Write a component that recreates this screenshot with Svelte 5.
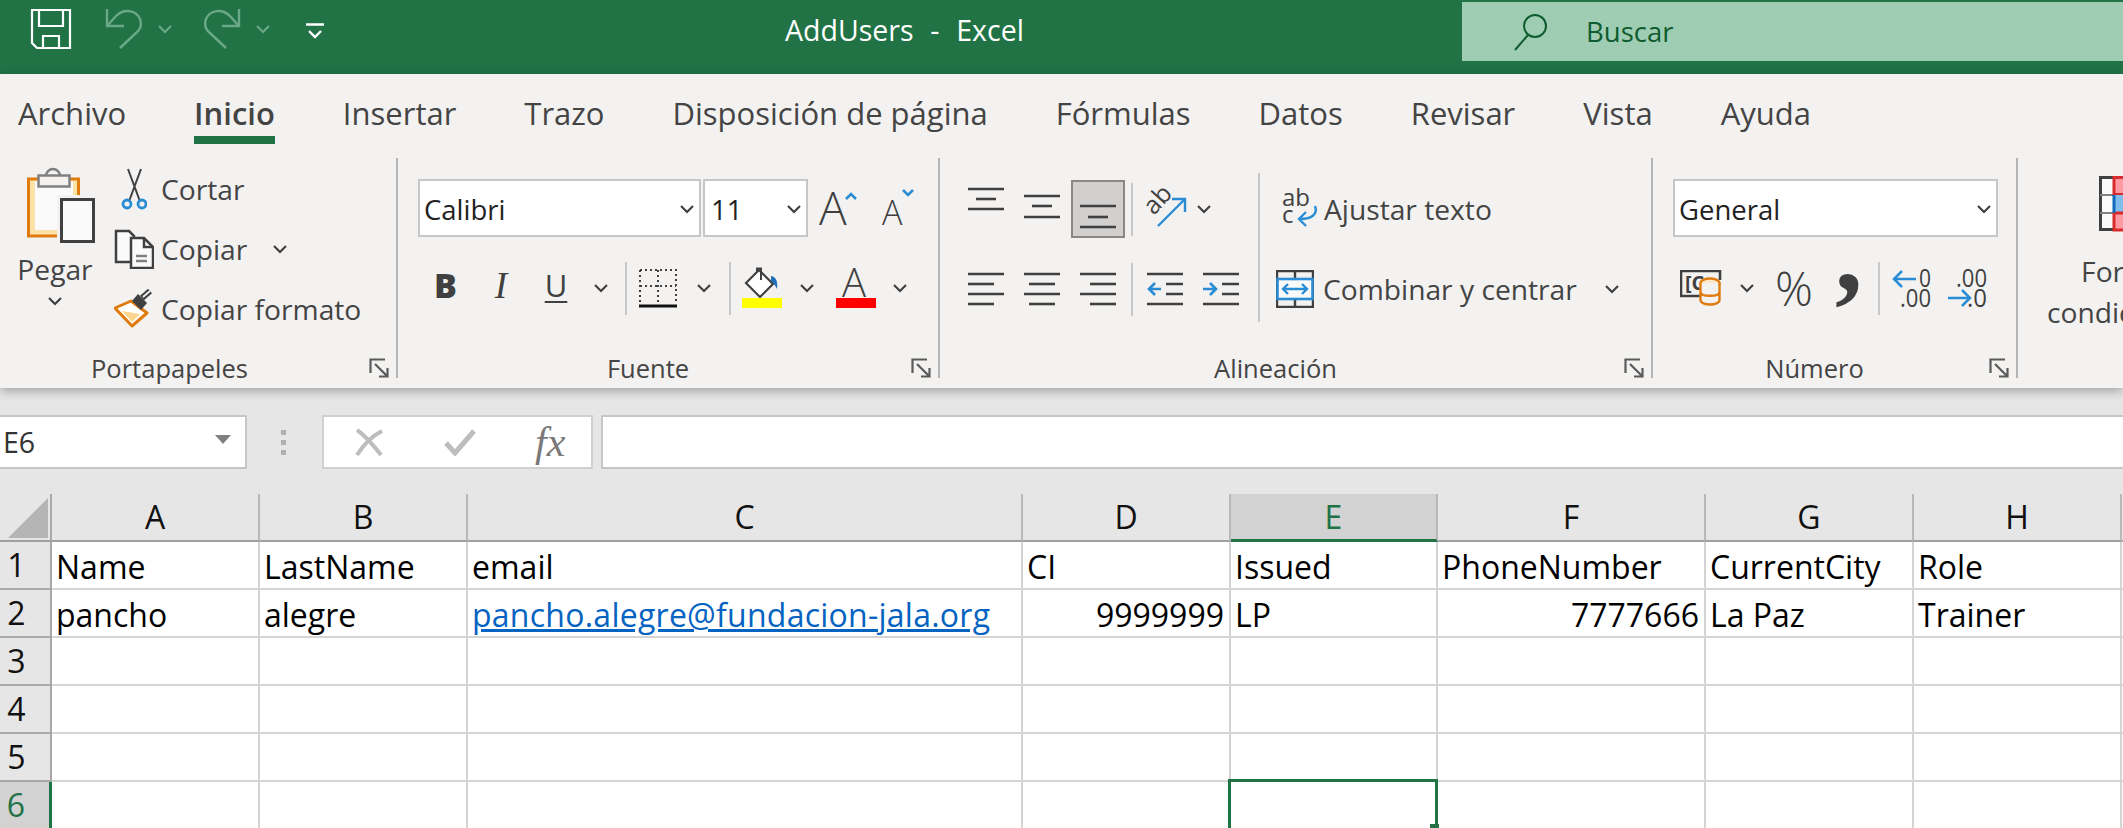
<script>
  const tabs = ['Archivo', 'Inicio', 'Insertar', 'Trazo', 'Disposición de página', 'Fórmulas', 'Datos', 'Revisar', 'Vista', 'Ayuda'];

  const columns = ['A', 'B', 'C', 'D', 'E', 'F', 'G', 'H', ''];
  const rows = [
    ['Name', 'LastName', 'email', 'CI', 'Issued', 'PhoneNumber', 'CurrentCity', 'Role', ''],
    ['pancho', 'alegre', 'pancho.alegre@fundacion-jala.org', '9999999', 'LP', '7777666', 'La Paz', 'Trainer', ''],
    ['', '', '', '', '', '', '', '', ''],
    ['', '', '', '', '', '', '', '', ''],
    ['', '', '', '', '', '', '', '', ''],
    ['', '', '', '', '', '', '', '', '']
  ];

  // vertical align icons: each line is [x1, x2, y]
  const vAlign = [
    { lines: [[0, 36, 4], [8, 28, 14], [0, 36, 24]], cls: '' },
    { lines: [[0, 36, 11], [8, 28, 21], [0, 36, 32]], cls: '' },
    { lines: [[0, 36, 21], [8, 28, 32], [0, 36, 42]], cls: 'active' }
  ];
  const hAlign = [
    [[0, 36, 3], [0, 26, 13], [0, 36, 23], [0, 26, 33]],
    [[0, 36, 3], [5, 31, 13], [0, 36, 23], [5, 31, 33]],
    [[0, 36, 3], [10, 36, 13], [0, 36, 23], [10, 36, 33]]
  ];
</script>

{#snippet chev()}
  <svg class="chev" width="14" height="9" viewBox="0 0 14 9"><path d="M1 1l6 6 6-6" fill="none" stroke="#404040" stroke-width="2.2" /></svg>
{/snippet}

{#snippet launcher()}
  <svg class="launcher" width="20" height="20" viewBox="0 0 20 20" fill="none" stroke="#5a5a5a" stroke-width="2.2">
    <path d="M1.5 15V1.5H16M6 6l12 12M18.500 10v8.500H10" />
  </svg>
{/snippet}

{#snippet lines(list, h)}
  <svg width="36" height={h} viewBox="0 0 36 {h}" stroke="#404040" stroke-width="2.6">
    {#each list as l}
      <line x1={l[0]} x2={l[1]} y1={l[2]} y2={l[2]} />
    {/each}
  </svg>
{/snippet}

<div class="app">
  <header class="titlebar">
    <div class="qat">
      <svg class="save" width="42" height="42" viewBox="-1 -1 42 42" fill="none" stroke="#fff" stroke-width="2.2">
        <path d="M1 1H39V39H6L1 34Z" /><path d="M8 1V17H32V1M12 39V27H28V39" />
      </svg>
      <svg class="undo" width="38" height="42" viewBox="-1 -1 38 42" fill="none" stroke="#6aa888" stroke-width="2.4">
        <path d="M1 0V17H18M1 17L10 7C18-1 30 1 34 10C36 16 34 21 30 24L14 39" />
      </svg>
      <svg class="chev q1" width="14" height="9" viewBox="0 0 14 9"><path d="M1 1l6 6 6-6" fill="none" stroke="#6aa888" stroke-width="2.2" /></svg>
      <svg class="undo redo" width="38" height="42" viewBox="-1 -1 38 42" fill="none" stroke="#6aa888" stroke-width="2.4">
        <path d="M35 0V17H18M35 17L26 7C18-1 6 1 2 10C0 16 2 21 6 24L22 39" />
      </svg>
      <svg class="chev q1" width="14" height="9" viewBox="0 0 14 9"><path d="M1 1l6 6 6-6" fill="none" stroke="#6aa888" stroke-width="2.2" /></svg>
      <svg class="custom" width="18" height="18" viewBox="0 0 18 18" fill="none" stroke="#fff" stroke-width="2.4">
        <path d="M0 1.500H18M3 8l6 6 6-6" />
      </svg>
    </div>
    <div class="title">AddUsers&nbsp; - &nbsp;Excel</div>
    <div class="search">
      <svg width="36" height="38" viewBox="0 0 36 38" fill="none" stroke="#0e5c2f" stroke-width="2">
        <circle cx="22" cy="13" r="11" /><path d="M15 22L2 37" />
      </svg>
      <span>Buscar</span>
    </div>
  </header>

  <div class="ribbon">
    <nav class="tabs">
      {#each tabs as tab}
        <div class="tab" class:current={tab === 'Inicio'}>{tab}</div>
      {/each}
    </nav>

    <div class="groups">
      <!-- Portapapeles -->
      <section class="group g-clip">
        <div class="content clip-content">
          <div class="paste">
            <svg width="70" height="76" viewBox="0 0 70 76">
              <rect x="2.500" y="12" width="50" height="57" fill="#fde2a6" stroke="#e07b10" stroke-width="3" />
              <rect x="9" y="14" width="38" height="49" fill="#fafafa" />
              <path d="M20 9a7 7 0 0 1 14 0" fill="#f3f2f1" stroke="#808080" stroke-width="2.500" />
              <rect x="12.500" y="8.500" width="31" height="11" fill="#f3f2f1" stroke="#808080" stroke-width="2.500" />
              <rect x="31" y="28" width="39" height="48" fill="#f3f2f1" />
              <rect x="35.500" y="32.500" width="32" height="42" fill="#fafafa" stroke="#404040" stroke-width="3" />
            </svg>
            <span>Pegar</span>
            {@render chev()}
          </div>
          <div class="small-btns">
            <div class="small">
              <span class="ic">
                <svg width="26" height="42" viewBox="0 0 26 42" fill="none">
                  <path d="M8.500 32L20 1M18.500 32L7 1" stroke="#404040" stroke-width="2" />
                  <circle cx="6" cy="36" r="4" stroke="#2a8dd4" stroke-width="2.800" />
                  <circle cx="21" cy="36" r="4" stroke="#2a8dd4" stroke-width="2.800" />
                </svg>
              </span>
              <span>Cortar</span>
            </div>
            <div class="small">
              <span class="ic">
                <svg width="40" height="40" viewBox="0 0 40 40" fill="#fafafa" stroke="#404040" stroke-width="2.500">
                  <path d="M2 33V2H15L20 7V33Z" />
                  <path d="M17 9H30L39 18V39H17Z" />
                  <path d="M30 9V18H39" fill="none" />
                  <path d="M22 27H33M22 32H33" stroke="#808080" fill="none" />
                </svg>
              </span>
              <span>Copiar</span>
              <span class="copy-chev">{@render chev()}</span>
            </div>
            <div class="small">
              <span class="ic">
                <svg width="40" height="40" viewBox="0 0 40 40">
                  <path d="M1 19L17 12L33 24L18 37Z" fill="#fff" stroke="#e07b10" stroke-width="3" stroke-linejoin="round" />
                  <path d="M8 22L26 25L18 33Z" fill="#fbd58c" />
                  <path d="M18 12L24 5L33 14L27 21Z" fill="#404040" />
                  <path d="M28 9L36 2" stroke="#404040" stroke-width="6" />
                  <path d="M29 8L36 2" stroke="#f3f2f1" stroke-width="1.800" />
                </svg>
              </span>
              <span>Copiar formato</span>
            </div>
          </div>
        </div>
        <div class="foot">
          <span class="label">Portapapeles</span>
          {@render launcher()}
        </div>
      </section>

      <!-- Fuente -->
      <section class="group g-font">
        <div class="content pad-top">
          <div class="line font-line">
            <div class="select font-name"><span>Calibri</span>{@render chev()}</div>
            <div class="select font-size"><span>11</span>{@render chev()}</div>
            <svg class="grow" width="42" height="40" viewBox="0 0 42 40">
              <text x="0" y="37" class="big-a">A</text>
              <path d="M27 11l5-5 5 5" fill="none" stroke="#2a8dd4" stroke-width="2.600" />
            </svg>
            <svg class="shrink" width="36" height="40" viewBox="0 0 36 40">
              <text x="0" y="37" class="small-a">A</text>
              <path d="M21 2l5 5 5-5" fill="none" stroke="#2a8dd4" stroke-width="2.600" />
            </svg>
          </div>
          <div class="fmt-row">
            <b class="cell fmt">B</b>
            <i class="cell fmt serif-i">I</i>
            <span class="cell fmt und">U</span>
            <span class="cell">{@render chev()}</span>
            <span class="cell"><span class="sep"></span></span>
            <span class="cell">
              <svg width="38" height="40" viewBox="0 0 38 40" fill="none">
                <path d="M1 2H37V35M1 2V35M19 2V35M1 18H37" stroke="#404040" stroke-width="2" stroke-dasharray="2 3" />
                <path d="M0 38H38" stroke="#111" stroke-width="3" />
              </svg>
            </span>
            <span class="cell">{@render chev()}</span>
            <span class="cell"><span class="sep"></span></span>
            <span class="cell">
              <svg width="42" height="42" viewBox="0 0 42 42">
                <path d="M4 16L17 3L31 17L18 30Z" fill="#fff" stroke="#404040" stroke-width="2.200" />
                <path d="M15 5V1.500H19V13" fill="none" stroke="#404040" stroke-width="2" />
                <path d="M29 9C34 10 36 14 35 22C33 18 31 15 29 14Z" fill="#1c6fb8" />
                <rect x="0" y="31" width="40" height="10" fill="#ffff00" />
              </svg>
            </span>
            <span class="cell">{@render chev()}</span>
            <span class="cell">
              <svg width="42" height="42" viewBox="0 0 42 42">
                <text x="7" y="30" class="color-a">A</text>
                <rect x="1" y="31" width="40" height="10" fill="#ff0000" />
              </svg>
            </span>
            <span class="cell">{@render chev()}</span>
          </div>
        </div>
        <div class="foot">
          <span class="label">Fuente</span>
          {@render launcher()}
        </div>
      </section>

      <!-- Alineación -->
      <section class="group g-align">
        <div class="content align-content">
          <div class="align-left">
            <div class="align-row top-row">
              {#each vAlign as a}
                <span class="al-btn {a.cls}">{@render lines(a.lines, 48)}</span>
              {/each}
              <span class="cell sep-cell"><span class="sep"></span></span>
              <svg class="orient" width="46" height="46" viewBox="0 0 46 46" fill="none">
                <text class="orient-t" transform="translate(10 30) rotate(-48)">ab</text>
                <path d="M14 40L41 13M28 13H41V26" stroke="#2a8dd4" stroke-width="2.400" />
              </svg>
              <span class="orient-chev">{@render chev()}</span>
            </div>
            <div class="align-row bottom-row">
              {#each hAlign as l}
                <span class="al-btn">{@render lines(l, 36)}</span>
              {/each}
              <span class="cell sep-cell"><span class="sep"></span></span>
              <svg class="indent" width="36" height="36" viewBox="0 0 36 36" fill="none">
                <path d="M0 3H36M0 33H36M19 13H36M19 23H36" stroke="#404040" stroke-width="2.600" />
                <path d="M14 18H2M8 12L2 18L8 24" stroke="#2a8dd4" stroke-width="2.600" />
              </svg>
              <svg class="indent in2" width="36" height="36" viewBox="0 0 36 36" fill="none">
                <path d="M0 3H36M0 33H36M19 13H36M19 23H36" stroke="#404040" stroke-width="2.600" />
                <path d="M0 18H13M7 12L13 18L7 24" stroke="#2a8dd4" stroke-width="2.600" />
              </svg>
            </div>
          </div>
          <div class="align-right">
            <div class="wide-btn wrap">
              <svg width="38" height="44" viewBox="0 0 38 44" fill="none">
                <text x="0" y="19" class="wrap-t">ab</text>
                <text x="0" y="36" class="wrap-t">c</text>
                <path d="M33 19C36 27 30 32 18 32M24 25L17 32L24 39" stroke="#2a8dd4" stroke-width="2.400" />
              </svg>
              <span>Ajustar texto</span>
            </div>
            <div class="wide-btn merge">
              <svg width="38" height="38" viewBox="0 0 38 38" fill="none">
                <path d="M1 1H37V37H1ZM19 1V9M19 29V37" stroke="#404040" stroke-width="2.400" />
                <rect x="1.500" y="9" width="35" height="20" fill="#fafafa" stroke="#2a8dd4" stroke-width="2.600" />
                <path d="M7 19H31M12 14L7 19L12 24M26 14L31 19L26 24" stroke="#2a8dd4" stroke-width="2.400" />
              </svg>
              <span>Combinar y centrar</span>
              <span class="merge-chev">{@render chev()}</span>
            </div>
          </div>
        </div>
        <div class="foot">
          <span class="label">Alineación</span>
          {@render launcher()}
        </div>
      </section>

      <!-- Número -->
      <section class="group g-num">
        <div class="content pad-top">
          <div class="line num-line">
            <div class="select num-format"><span>General</span>{@render chev()}</div>
          </div>
          <div class="num-row">
            <svg class="acct" width="42" height="36" viewBox="0 0 42 36" fill="none">
              <path d="M20 26H1V1H40V10" stroke="#404040" stroke-width="2.600" />
              <text x="5" y="20" class="acct-t">[C</text>
              <ellipse cx="30" cy="13" rx="9.500" ry="4.500" fill="#fde9c8" stroke="#e07b10" stroke-width="2.400" />
              <path d="M20.500 13V30C20.500 36 39.500 36 39.500 30V13M20.500 22C20.500 27 39.500 27 39.500 22" stroke="#e07b10" stroke-width="2.400" fill="#f3f2f1" />
            </svg>
            <span class="num-chev">{@render chev()}</span>
            <span class="percent">%</span>
            <span class="comma">,</span>
            <span class="cell"><span class="sep"></span></span>
            <svg class="dec" width="40" height="40" viewBox="0 0 40 40" fill="none">
              <text x="27" y="19" class="dec-t" textLength="12" lengthAdjust="spacingAndGlyphs">0</text>
              <text x="8" y="39" class="dec-t" textLength="31" lengthAdjust="spacingAndGlyphs">.00</text>
              <path d="M24 11H2M10 3L2 11L10 19" stroke="#2a8dd4" stroke-width="2.500" />
            </svg>
            <svg class="dec dec2" width="40" height="40" viewBox="0 0 40 40" fill="none">
              <text x="8" y="19" class="dec-t" textLength="31" lengthAdjust="spacingAndGlyphs">.00</text>
              <text x="19" y="39" class="dec-t" textLength="20" lengthAdjust="spacingAndGlyphs">.0</text>
              <path d="M0 30H22M14 22L22 30L14 38" stroke="#2a8dd4" stroke-width="2.500" />
            </svg>
          </div>
        </div>
        <div class="foot">
          <span class="label">Número</span>
          {@render launcher()}
        </div>
      </section>

      <!-- Formato condicional, cut off by the window -->
      <section class="g-cond">
        <svg width="60" height="56" viewBox="0 0 60 56">
          <rect x="1.500" y="1.500" width="14" height="52" fill="#fafafa" stroke="#404040" stroke-width="3" />
          <path d="M1 19H15M1 37H15" stroke="#808080" stroke-width="2" />
          <rect x="15" y="1.500" width="40" height="17" fill="#ff9aa2" stroke="#d92b2b" stroke-width="3" />
          <rect x="15" y="19" width="40" height="18" fill="#80bcec" />
          <rect x="15" y="37" width="40" height="17" fill="#ff9aa2" stroke="#d92b2b" stroke-width="3" />
          <path d="M15 19V37" stroke="#0f6cbd" stroke-width="3" />
        </svg>
        <div>Formato</div>
        <div>condicional ⌄</div>
      </section>
    </div>
  </div>

  <div class="formula">
    <div class="namebox"><span>E6</span><i class="tri"></i></div>
    <div class="grip"><i></i><i></i><i></i></div>
    <div class="fxbox">
      <svg width="30" height="28" viewBox="0 0 30 28" fill="none" stroke="#bdbdbd" stroke-width="4">
        <path d="M3 2C12 8 20 18 27 27M3 27C10 16 18 8 28 3" />
      </svg>
      <svg width="32" height="28" viewBox="0 0 32 28" fill="none" stroke="#bdbdbd" stroke-width="5">
        <path d="M2 15L11 25L30 3" />
      </svg>
      <span class="fx">fx</span>
    </div>
    <div class="fxinput"></div>
  </div>

  <div class="sheet">
    <div class="corner"><i></i></div>
    {#each columns as col}
      <div class="colhead" class:sel={col === 'E'}>{col}</div>
    {/each}
    {#each rows as row, r}
      <div class="rowhead" class:sel={r === 5}><span>{r + 1}</span></div>
      {#each row as value, c}
        <div class="gridcell" class:num={r === 1 && (c === 3 || c === 5)} class:link={c === 2 && r === 1} class:active={c === 4 && r === 5}>
          {#if c === 2 && r === 1}<u>{value}</u>{:else}{value}{/if}
          {#if c === 4 && r === 5}<i class="handle"></i>{/if}
        </div>
      {/each}
    {/each}
  </div>
</div>

<style>
  :global(body) {
    margin: 0;
    background: #fff;
  }
  .app {
    width: 2123px;
    height: 828px;
    overflow: hidden;
    font-family: "Open Sans", "Noto Sans", sans-serif;
    color: #444;
    background: #e6e6e6;
  }
  svg {
    display: block;
    flex: none;
  }

  /* title bar */
  .titlebar {
    height: 74px;
    box-sizing: border-box;
    background: #217346;
    display: flex;
    align-items: flex-start;
    padding-top: 2px;
  }
  .qat {
    width: 785px;
    flex: none;
    display: flex;
    align-items: center;
    padding: 12px 0 0 30px;
    box-sizing: border-box;
    height: 42px;
    margin-top: 0;
  }
  .qat .undo {
    margin-left: 33px;
  }
  .qat .q1 {
    margin: 0 0 0 15px;
  }
  .qat .redo {
    margin-left: 31px;
  }
  .custom {
    margin-left: 36px;
    margin-top: 6px;
  }
  .title {
    color: #fff;
    font-size: 28.500px;
    word-spacing: 1px;
    line-height: 56px;
    white-space: nowrap;
  }
  .search {
    margin-left: auto;
    width: 661px;
    height: 59px;
    box-sizing: border-box;
    background: #9fcdb3;
    color: #0e5c2f;
    display: flex;
    align-items: center;
    gap: 37px;
    padding-left: 51px;
    font-size: 27.500px;
  }

  /* ribbon */
  .ribbon {
    position: relative;
    height: 314px;
    background: #f3f2f1;
    box-shadow: 0 3px 10px rgba(0, 0, 0, 0.3);
  }
  .tabs {
    height: 84px;
    box-sizing: border-box;
    display: flex;
    gap: 68px;
    padding-left: 18px;
    font-size: 31px;
  }
  .tab {
    height: 70px;
    line-height: 78px;
    white-space: nowrap;
    box-sizing: border-box;
  }
  .tab.current {
    font-weight: 600;
    border-bottom: 8px solid #217346;
  }
  .groups {
    display: flex;
    height: 220px;
    font-size: 28.200px;
  }
  .group {
    flex: none;
    height: 220px;
    box-sizing: border-box;
    border-right: 2px solid #b4b4b4;
    display: flex;
    flex-direction: column;
  }
  .g-clip { width: 398px; }
  .g-font { width: 542px; }
  .g-align { width: 713px; }
  .g-num { width: 365px; }
  .content {
    height: 200px;
    flex: none;
  }
  .foot {
    height: 20px;
    display: flex;
    align-items: center;
    padding-right: 7px;
  }
  .label {
    flex: 1;
    text-align: center;
    font-size: 25.500px;
    padding-right: 13px;
    white-space: nowrap;
  }
  .g-clip .label {
    padding-right: 30px;
  }
  .chev {
    flex: none;
  }
  .cell {
    display: flex;
    align-items: center;
    justify-content: center;
  }
  .sep {
    display: block;
    width: 2px;
    height: 53px;
    background: #c8c8c8;
  }

  /* clipboard group */
  .clip-content {
    display: flex;
  }
  .paste {
    width: 114px;
    flex: none;
    display: flex;
    flex-direction: column;
    padding-top: 9px;
    box-sizing: border-box;
    align-items: center;
    line-height: 36px;
  }
  .paste svg:first-child {
    align-self: flex-start;
    margin: 0 0 8px 26px;
  }
  .paste span {
    margin-right: 4px;
  }
  .paste .chev {
    margin: 10px 4px 0 0;
  }
  .small-btns {
    padding-top: 1px;
  }
  .small {
    height: 60px;
    display: flex;
    align-items: center;
    gap: 7px;
    white-space: nowrap;
  }
  .ic {
    width: 40px;
    display: flex;
    justify-content: center;
  }
  .copy-chev {
    margin-left: 19px;
  }

  /* selects */
  .pad-top {
    padding-top: 21px;
    box-sizing: border-box;
  }
  .line {
    display: flex;
    align-items: center;
  }
  .font-line {
    padding-left: 20px;
    gap: 2px;
  }
  .select {
    height: 58px;
    box-sizing: border-box;
    border: 2px solid #c6c6c6;
    background: #fff;
    color: #222;
    display: flex;
    align-items: center;
    justify-content: space-between;
    padding: 2px 5px 0 4px;
    font-size: 27.500px;
  }
  .font-name { width: 283px; }
  .font-size { width: 105px; padding-left: 6px; }
  .grow { margin-left: 9px; }
  .shrink { margin-left: 19px; }
  .big-a { font-size: 46px; font-weight: 300; fill: #404040; }
  .small-a { font-size: 34px; font-weight: 300; fill: #404040; }
  .color-a { font-size: 40px; font-weight: 300; fill: #404040; }

  .fmt-row {
    margin: 21px 0 0 20px;
    height: 60px;
    display: grid;
    grid-template-columns: 55px 56px 54px 36px 14px 50px 42px 10px 56px 32px 66px 22px;
    align-items: center;
  }
  .fmt {
    color: #404040;
    font-size: 31px;
    margin-top: -6px;
  }
  b.fmt {
    font-weight: 800;
    font-size: 34px;
  }
  .serif-i {
    font-family: "Liberation Serif", serif;
    font-size: 37px;
  }
  .und {
    text-decoration: underline;
    text-underline-offset: 4px;
    text-decoration-thickness: 2px;
  }

  /* alignment group */
  .align-content {
    display: flex;
    position: relative;
  }
  .align-left {
    width: 320px;
    flex: none;
    padding: 7px 0 0 28px;
    box-sizing: border-box;
    border-right: 2px solid #c8c8c8;
    height: 149px;
    margin-top: 15px;
  }
  .align-row {
    display: flex;
    align-items: center;
    height: 58px;
  }
  .bottom-row {
    margin-top: 21px;
    height: 60px;
  }
  .al-btn {
    width: 36px;
    margin-right: 20px;
    flex: none;
    display: flex;
    justify-content: center;
    box-sizing: border-box;
  }
  .al-btn.active {
    width: 54px;
    height: 58px;
    margin: 0 0 0 -9px;
    background: #d2d0ce;
    border: 2px solid #8a8886;
    align-items: center;
  }
  .sep-cell {
    width: 2px;
    flex: none;
  }
  .top-row .sep-cell {
    margin-left: 6px;
  }
  .bottom-row .sep-cell {
    margin-left: -5px;
  }
  .orient {
    margin-left: 11px;
  }
  .orient-t {
    font-size: 25px;
    fill: #404040;
  }
  .orient-chev {
    margin-left: 7px;
  }
  .indent {
    margin-left: 14px;
  }
  .in2 {
    margin-left: 20px;
  }
  .align-right {
    padding: 29px 0 0 16px;
  }
  .wide-btn {
    display: flex;
    align-items: center;
    white-space: nowrap;
    gap: 8px;
  }
  .wrap {
    height: 44px;
    padding-left: 6px;
    gap: 4px;
  }
  .wrap-t {
    font-size: 24px;
    fill: #404040;
  }
  .merge {
    height: 44px;
    margin-top: 36px;
    gap: 9px;
  }
  .merge-chev {
    margin-left: 19px;
  }

  /* number group */
  .num-line {
    padding-left: 20px;
  }
  .num-format {
    width: 325px;
  }
  .num-row {
    margin: 21px 0 0 27px;
    height: 60px;
    display: flex;
    align-items: center;
  }
  .num-chev {
    margin: 0 0 0 18px;
  }
  .percent {
    font-size: 47px;
    font-weight: 300;
    margin-left: 21px;
    line-height: 60px;
    color: #404040;
  }
  .comma {
    font-family: "Liberation Serif", serif;
    font-weight: 700;
    font-size: 110px;
    line-height: 60px;
    margin: -70px -3px 0 22px;
    color: #404040;
  }
  .num-row .cell {
    margin-left: 19px;
  }
  .dec {
    margin-left: 12px;
  }
  .dec2 {
    margin-left: 16px;
  }
  .dec-t {
    font-size: 25px;
    fill: #404040;
  }
  .acct-t {
    font-size: 20px;
    font-weight: 700;
    fill: #404040;
  }

  .g-cond {
    flex: none;
    width: 184px;
    margin-left: 27px;
    text-align: center;
    line-height: 41px;
    white-space: nowrap;
  }
  .g-cond svg {
    margin: 18px 0 19px 54px;
  }

  /* formula bar */
  .formula {
    display: flex;
    height: 54px;
    margin: 27px 0 25px;
    font-size: 28.500px;
  }
  .namebox {
    width: 247px;
    box-sizing: border-box;
    background: #fff;
    border: 2px solid #c6c6c6;
    border-left: none;
    display: flex;
    align-items: center;
    justify-content: space-between;
    padding: 0 14px 0 3px;
    color: #333;
  }
  .tri {
    width: 0;
    height: 0;
    border-left: 8px solid transparent;
    border-right: 8px solid transparent;
    border-top: 9px solid #808080;
    margin-top: -6px;
  }
  .grip {
    width: 75px;
    display: flex;
    flex-direction: column;
    align-items: center;
    justify-content: center;
    gap: 5px;
    padding-right: 3px;
    box-sizing: border-box;
  }
  .grip i {
    width: 5px;
    height: 5px;
    background: #b0b0b0;
  }
  .fxbox {
    width: 271px;
    box-sizing: border-box;
    background: #fff;
    border: 2px solid #d0d0d0;
    display: flex;
    align-items: center;
    padding-left: 30px;
  }
  .fxbox svg:nth-child(2) {
    margin-left: 60px;
  }
  .fx {
    margin-left: 59px;
    font-family: "Liberation Serif", serif;
    font-style: italic;
    font-size: 42px;
    color: #7a7a7a;
  }
  .fxinput {
    flex: 1;
    margin-left: 8px;
    background: #fff;
    border: 2px solid #c6c6c6;
    border-right: none;
  }

  /* sheet */
  .sheet {
    display: grid;
    grid-template-columns: 52px 208px 208px 555px 208px 207px 268px 208px 208px 1fr;
    grid-auto-rows: 48px;
    font-size: 32px;
    line-height: 46px;
    color: #000;
  }
  .corner {
    background: #e6e6e6;
    border-right: 2px solid #a8a8a8;
    border-bottom: 2px solid #a0a0a0;
    box-sizing: border-box;
    display: flex;
    align-items: flex-end;
    justify-content: flex-end;
    padding: 0 2px 2px 0;
  }
  .corner i {
    width: 40px;
    height: 40px;
    background: #b5b5b5;
    clip-path: polygon(100% 0, 100% 100%, 0 100%);
  }
  .colhead {
    box-sizing: border-box;
    background: #e6e6e6;
    border-right: 2px solid #b8b8b8;
    border-bottom: 2px solid #a0a0a0;
    text-align: center;
    color: #111;
  }
  .colhead.sel {
    background: #d2d2d2;
    color: #217346;
    border-bottom: 3px solid #217346;
  }
  .colhead:last-of-type {
    border-right: none;
  }
  .rowhead {
    box-sizing: border-box;
    background: #e6e6e6;
    border-right: 2px solid #a8a8a8;
    border-bottom: 2px solid #a8a8a8;
    text-align: center;
    padding-right: 17px;
    color: #111;
  }
  .rowhead.sel {
    background: #d2d2d2;
    color: #217346;
    border-right: 3px solid #217346;
  }
  .gridcell {
    position: relative;
    box-sizing: border-box;
    background: #fff;
    border-right: 2px solid #d4d4d4;
    border-bottom: 2px solid #d4d4d4;
    padding: 0 5px 0 4px;
    white-space: nowrap;
    line-height: 50px;
  }
  .gridcell.num {
    text-align: right;
  }
  .gridcell.link {
    color: #0563c1;
    letter-spacing: 0.25px;
  }
  .gridcell.active::after {
    content: "";
    position: absolute;
    left: -3px;
    top: -3px;
    right: -2px;
    bottom: -3px;
    border: 3px solid #217346;
  }
  .handle {
    position: absolute;
    right: -3px;
    top: 42px;
    width: 9px;
    height: 6px;
    background: #217346;
    z-index: 1;
  }
</style>
